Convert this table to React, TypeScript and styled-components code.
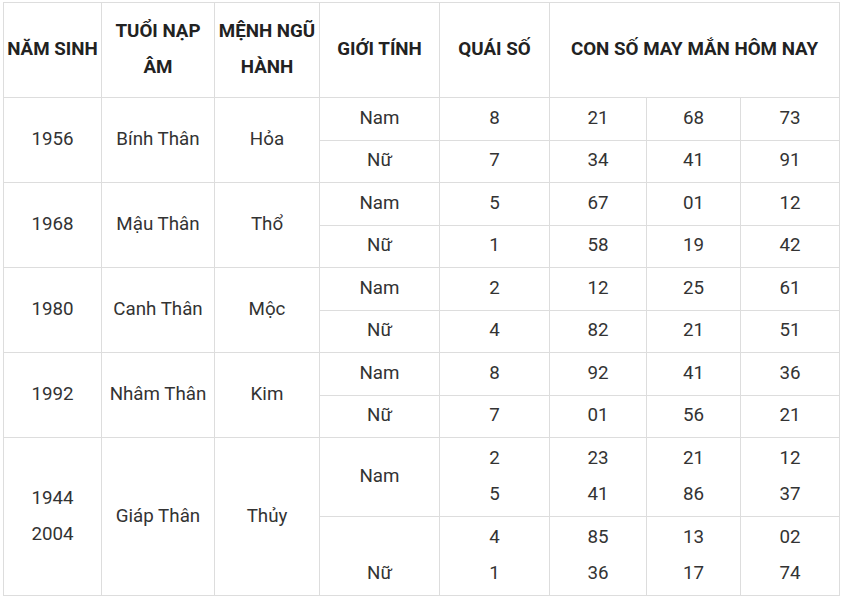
import { createGlobalStyle } from 'styled-components';
import styled from 'styled-components';

const GlobalStyle = createGlobalStyle`
  html, body {
    margin: 0;
    padding: 0;
    background: #ffffff;
  }
  body {
    font-family: Roboto, "Noto Sans", Arial, sans-serif;
  }
`;

const Wrapper = styled.div`
  padding: 2px 0 0 3px;
`;

const Table = styled.table`
  border-collapse: collapse;
  table-layout: fixed;
  width: 836px;
  font-size: 18.75px;
  color: #333333;
`;

const HeadCell = styled.th`
  border: 1px solid #dddddd;
  padding: 10px 2px 12px;
  height: 72px;
  line-height: 36px;
  font-weight: 700;
  color: #222222;
  text-align: center;
  vertical-align: middle;
`;

const Cell = styled.td<{ $tall?: boolean }>`
  border: 1px solid #dddddd;
  padding: ${(p) => (p.$tall ? '2px 4px 4px' : '2.5px 4px 3.5px')};
  line-height: ${(p) => (p.$tall ? '36px' : '35.5px')};
  text-align: center;
  vertical-align: middle;
`;

type Row = { gender: string; quai: string; nums: [string, string, string] };
type Group = { years: string[]; tuoi: string; menh: string; rows: Row[] };

const groups: Group[] = [
  {
    years: ['1956'],
    tuoi: 'Bính Thân',
    menh: 'Hỏa',
    rows: [
      { gender: 'Nam', quai: '8', nums: ['21', '68', '73'] },
      { gender: 'Nữ', quai: '7', nums: ['34', '41', '91'] },
    ],
  },
  {
    years: ['1968'],
    tuoi: 'Mậu Thân',
    menh: 'Thổ',
    rows: [
      { gender: 'Nam', quai: '5', nums: ['67', '01', '12'] },
      { gender: 'Nữ', quai: '1', nums: ['58', '19', '42'] },
    ],
  },
  {
    years: ['1980'],
    tuoi: 'Canh Thân',
    menh: 'Mộc',
    rows: [
      { gender: 'Nam', quai: '2', nums: ['12', '25', '61'] },
      { gender: 'Nữ', quai: '4', nums: ['82', '21', '51'] },
    ],
  },
  {
    years: ['1992'],
    tuoi: 'Nhâm Thân',
    menh: 'Kim',
    rows: [
      { gender: 'Nam', quai: '8', nums: ['92', '41', '36'] },
      { gender: 'Nữ', quai: '7', nums: ['01', '56', '21'] },
    ],
  },
];

const lastGroup = {
  nam: { quai: ['2', '5'], nums: [['23', '41'], ['21', '86'], ['12', '37']] },
  nu: { quai: ['4', '1'], nums: [['85', '36'], ['13', '17'], ['02', '74']] },
};

const Lines = ({ items }: { items: string[] }) => (
  <>
    {items.map((t, i) => (
      <span key={i}>
        {i > 0 && <br />}
        {t}
      </span>
    ))}
  </>
);

export default function App() {
  return (
    <>
      <GlobalStyle />
      <Wrapper>
        <Table>
          <colgroup>
            <col style={{ width: 98 }} />
            <col style={{ width: 113 }} />
            <col style={{ width: 105 }} />
            <col style={{ width: 120 }} />
            <col style={{ width: 110 }} />
            <col style={{ width: 97 }} />
            <col style={{ width: 94 }} />
            <col style={{ width: 99 }} />
          </colgroup>
          <thead>
            <tr>
              <HeadCell>NĂM SINH</HeadCell>
              <HeadCell>
                TUỔI NẠP
                <br />
                ÂM
              </HeadCell>
              <HeadCell>
                MỆNH NGŨ
                <br />
                HÀNH
              </HeadCell>
              <HeadCell>GIỚI TÍNH</HeadCell>
              <HeadCell>QUÁI SỐ</HeadCell>
              <HeadCell colSpan={3}>CON SỐ MAY MẮN HÔM NAY</HeadCell>
            </tr>
          </thead>
          <tbody>
            {groups.map((g) =>
              g.rows.map((r, i) => (
                <tr key={g.tuoi + r.gender}>
                  {i === 0 && (
                    <>
                      <Cell rowSpan={2}>{g.years[0]}</Cell>
                      <Cell rowSpan={2}>{g.tuoi}</Cell>
                      <Cell rowSpan={2}>{g.menh}</Cell>
                    </>
                  )}
                  <Cell>{r.gender}</Cell>
                  <Cell>{r.quai}</Cell>
                  {r.nums.map((n, j) => (
                    <Cell key={j}>{n}</Cell>
                  ))}
                </tr>
              ))
            )}
            <tr>
              <Cell $tall rowSpan={2}>
                <Lines items={['1944', '2004']} />
              </Cell>
              <Cell $tall rowSpan={2}>Giáp Thân</Cell>
              <Cell $tall rowSpan={2}>Thủy</Cell>
              <Cell $tall>Nam</Cell>
              <Cell $tall>
                <Lines items={lastGroup.nam.quai} />
              </Cell>
              {lastGroup.nam.nums.map((n, j) => (
                <Cell $tall key={j}>
                  <Lines items={n} />
                </Cell>
              ))}
            </tr>
            <tr>
              <Cell $tall>
                <br />
                Nữ
              </Cell>
              <Cell $tall>
                <Lines items={lastGroup.nu.quai} />
              </Cell>
              {lastGroup.nu.nums.map((n, j) => (
                <Cell $tall key={j}>
                  <Lines items={n} />
                </Cell>
              ))}
            </tr>
          </tbody>
        </Table>
      </Wrapper>
    </>
  );
}
